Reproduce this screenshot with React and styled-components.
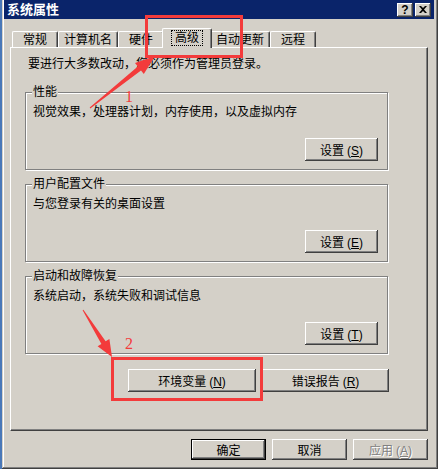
import React from "react";
import styled, { createGlobalStyle } from "styled-components";

const GlobalStyle = createGlobalStyle`
  body {
    margin: 0;
    background: #4a78b8;
    font-family: "Liberation Sans", "Noto Sans CJK SC", sans-serif;
    font-size: 12px;
    color: #000;
  }
`;

const FACE = "#d4d0c8";
const RED = "#f33b3b";

const Screen = styled.div`
  position: relative;
  width: 438px;
  height: 469px;
  overflow: hidden;
`;

const Window = styled.div`
  margin-left: 2px;
  width: 436px;
  height: 469px;
  box-sizing: border-box;
  display: flex;
  flex-direction: column;
  padding: 0 4px 9px 2px;
  background: ${FACE};
  box-shadow: inset -1px -1px #404040, inset 1px 0 ${FACE},
    inset -2px -2px #808080, inset 2px 0 #fff;
`;

const TitleBar = styled.div`
  height: 19px;
  display: flex;
  align-items: center;
  padding-left: 3px;
  background: #0a246a;
  color: #fff;
  font-weight: bold;
  font-size: 13px;
`;

const TitleText = styled.span`
  flex: 1;
  line-height: 19px;
`;

const TitleButton = styled.div`
  width: 16px;
  height: 14px;
  margin-right: ${(p) => (p.$last ? 3 : 2)}px;
  display: flex;
  align-items: center;
  justify-content: center;
  background: ${FACE};
  color: #000;
  font: bold 12px "Liberation Sans", sans-serif;
  box-shadow: inset -1px -1px #404040, inset 1px 1px #fff,
    inset -2px -2px #808080;
`;

const Body = styled.div`
  flex: 1;
  display: flex;
  flex-direction: column;
  padding: 0 6px;
`;

const TabRow = styled.div`
  display: flex;
  align-items: flex-end;
  margin-top: 9px;
  padding-left: 2px;
`;

const Tab = styled.div`
  position: relative;
  z-index: ${(p) => (p.$active ? 1 : 0)};
  box-sizing: border-box;
  height: ${(p) => (p.$active ? 20 : 16)}px;
  min-width: ${(p) => (p.$active ? 50 : 46)}px;
  margin: 0 ${(p) => (p.$active ? -2 : 0)}px ${(p) => (p.$active ? -1 : 0)}px;
  padding: ${(p) => (p.$active ? "2px 5px 0" : "1px 5px 0")};
  display: flex;
  justify-content: center;
  line-height: 14px;
  background: ${FACE};
  border-top: 1px solid #fff;
  border-left: 1px solid #fff;
  border-right: 1px solid #404040;
  border-radius: 2px 2px 0 0;
  box-shadow: inset -1px 0 #808080;
`;

const FocusLabel = styled.span`
  outline: 1px dotted #000;
  padding: 0 3px;
  height: 14px;
`;

const Panel = styled.div`
  flex: 1;
  display: flex;
  flex-direction: column;
  padding: 9px 0 0 14px;
  border-top: 1px solid #fff;
  border-left: 1px solid #fff;
  border-right: 1px solid #404040;
  border-bottom: 1px solid #404040;
  box-shadow: inset -1px -1px #808080;
`;

const Intro = styled.div`
  margin-left: 3px;
  line-height: 14px;
`;

const Group = styled.fieldset`
  width: 363px;
  box-sizing: border-box;
  min-inline-size: 0;
  margin: 14px 0 0;
  padding: 6px 9px 8px 7px;
  border: 1px solid #808080;
  box-shadow: inset 1px 1px #fff, 1px 1px #fff;

  & + & {
    margin-top: 7px;
  }
`;

const Legend = styled.legend`
  padding: 0 1px;
  margin-left: -1px;
  line-height: 14px;
  background: ${FACE};
`;

const GroupText = styled.div`
  line-height: 14px;
`;

const ButtonRow = styled.div`
  display: flex;
  justify-content: flex-end;
  gap: ${(p) => p.$gap || 0}px;
  margin-top: ${(p) => p.$top || 0}px;
  width: ${(p) => (p.$width ? p.$width + "px" : "auto")};
`;

const Button = styled.button`
  width: ${(p) => p.$width || 73}px;
  height: ${(p) => p.$height || 23}px;
  padding: 0;
  border: none;
  background: ${FACE};
  font: 12px "Liberation Sans", "Noto Sans CJK SC", sans-serif;
  color: ${(p) => (p.disabled ? "#808080" : "#000")};
  text-shadow: ${(p) => (p.disabled ? "1px 1px #fff" : "none")};
  box-shadow: ${(p) =>
    p.$default
      ? "inset 0 0 0 1px #000, inset -2px -2px #404040, inset 2px 2px #fff, inset -3px -3px #808080"
      : "inset -1px -1px #404040, inset 1px 1px #fff, inset -2px -2px #808080"};
`;

const Key = styled.span`
  margin-left: 3px;

  u {
    text-decoration: underline;
  }
`;

const Overlay = styled.svg`
  position: absolute;
  top: 0;
  left: 0;
  pointer-events: none;
`;

function CloseGlyph() {
  return (
    <svg width="8" height="7" viewBox="0 0 8 7">
      <path d="M0 0h2l2 2 2-2h2L5 3.5 8 7H6L4 5 2 7H0l3-3.5z" fill="#000" />
    </svg>
  );
}

function Accel({ k }) {
  return (
    <Key>
      (<u>{k}</u>)
    </Key>
  );
}

const tabs = ["常规", "计算机名", "硬件", "高级", "自动更新", "远程"];

export default function App() {
  return (
    <>
      <GlobalStyle />
      <Screen>
        <Window>
          <TitleBar>
            <TitleText>系统属性</TitleText>
            <TitleButton>?</TitleButton>
            <TitleButton $last>
              <CloseGlyph />
            </TitleButton>
          </TitleBar>

          <Body>
            <TabRow>
              {tabs.map((t) =>
                t === "高级" ? (
                  <Tab key={t} $active>
                    <FocusLabel>{t}</FocusLabel>
                  </Tab>
                ) : (
                  <Tab key={t}>{t}</Tab>
                )
              )}
            </TabRow>

            <Panel>
              <Intro>要进行大多数改动，您必须作为管理员登录。</Intro>

              <Group>
                <Legend>性能</Legend>
                <GroupText>视觉效果，处理器计划，内存使用，以及虚拟内存</GroupText>
                <ButtonRow $top={19}>
                  <Button>
                    设置<Accel k="S" />
                  </Button>
                </ButtonRow>
              </Group>

              <Group>
                <Legend>用户配置文件</Legend>
                <GroupText>与您登录有关的桌面设置</GroupText>
                <ButtonRow $top={19}>
                  <Button>
                    设置<Accel k="E" />
                  </Button>
                </ButtonRow>
              </Group>

              <Group>
                <Legend>启动和故障恢复</Legend>
                <GroupText>系统启动，系统失败和调试信息</GroupText>
                <ButtonRow $top={19}>
                  <Button>
                    设置<Accel k="T" />
                  </Button>
                </ButtonRow>
              </Group>

              <ButtonRow $top={15} $gap={6} $width={364}>
                <Button $width={128}>
                  环境变量<Accel k="N" />
                </Button>
                <Button $width={127}>
                  错误报告<Accel k="R" />
                </Button>
              </ButtonRow>
            </Panel>

            <ButtonRow $top={8} $gap={6}>
              <Button $width={75} $height={21} $default>
                确定
              </Button>
              <Button $width={75} $height={21}>
                取消
              </Button>
              <Button $width={75} $height={21} disabled>
                应用<Accel k="A" />
              </Button>
            </ButtonRow>
          </Body>
        </Window>

        <Overlay width="438" height="469" viewBox="0 0 438 469">
          <rect x="146.5" y="16.5" width="95" height="40" fill="none" stroke={RED} strokeWidth="3" />
          <polygon
            points="90.3,108.4 141,70.5 143.8,74 155,56 135,63 137.8,66.5 89.7,107.6"
            fill={RED}
          />
          <text x="125" y="102" fill={RED} fontSize="16" fontFamily="Liberation Serif">
            1
          </text>
          <rect x="112.5" y="358.5" width="149" height="41" fill="none" stroke={RED} strokeWidth="3" />
          <polygon
            points="82.6,310.3 101.4,343.9 97.6,346.3 112,357 109.4,338.9 105.6,341.3 83.4,309.7"
            fill={RED}
          />
          <text x="125" y="349" fill={RED} fontSize="16" fontFamily="Liberation Serif">
            2
          </text>
        </Overlay>
      </Screen>
    </>
  );
}
